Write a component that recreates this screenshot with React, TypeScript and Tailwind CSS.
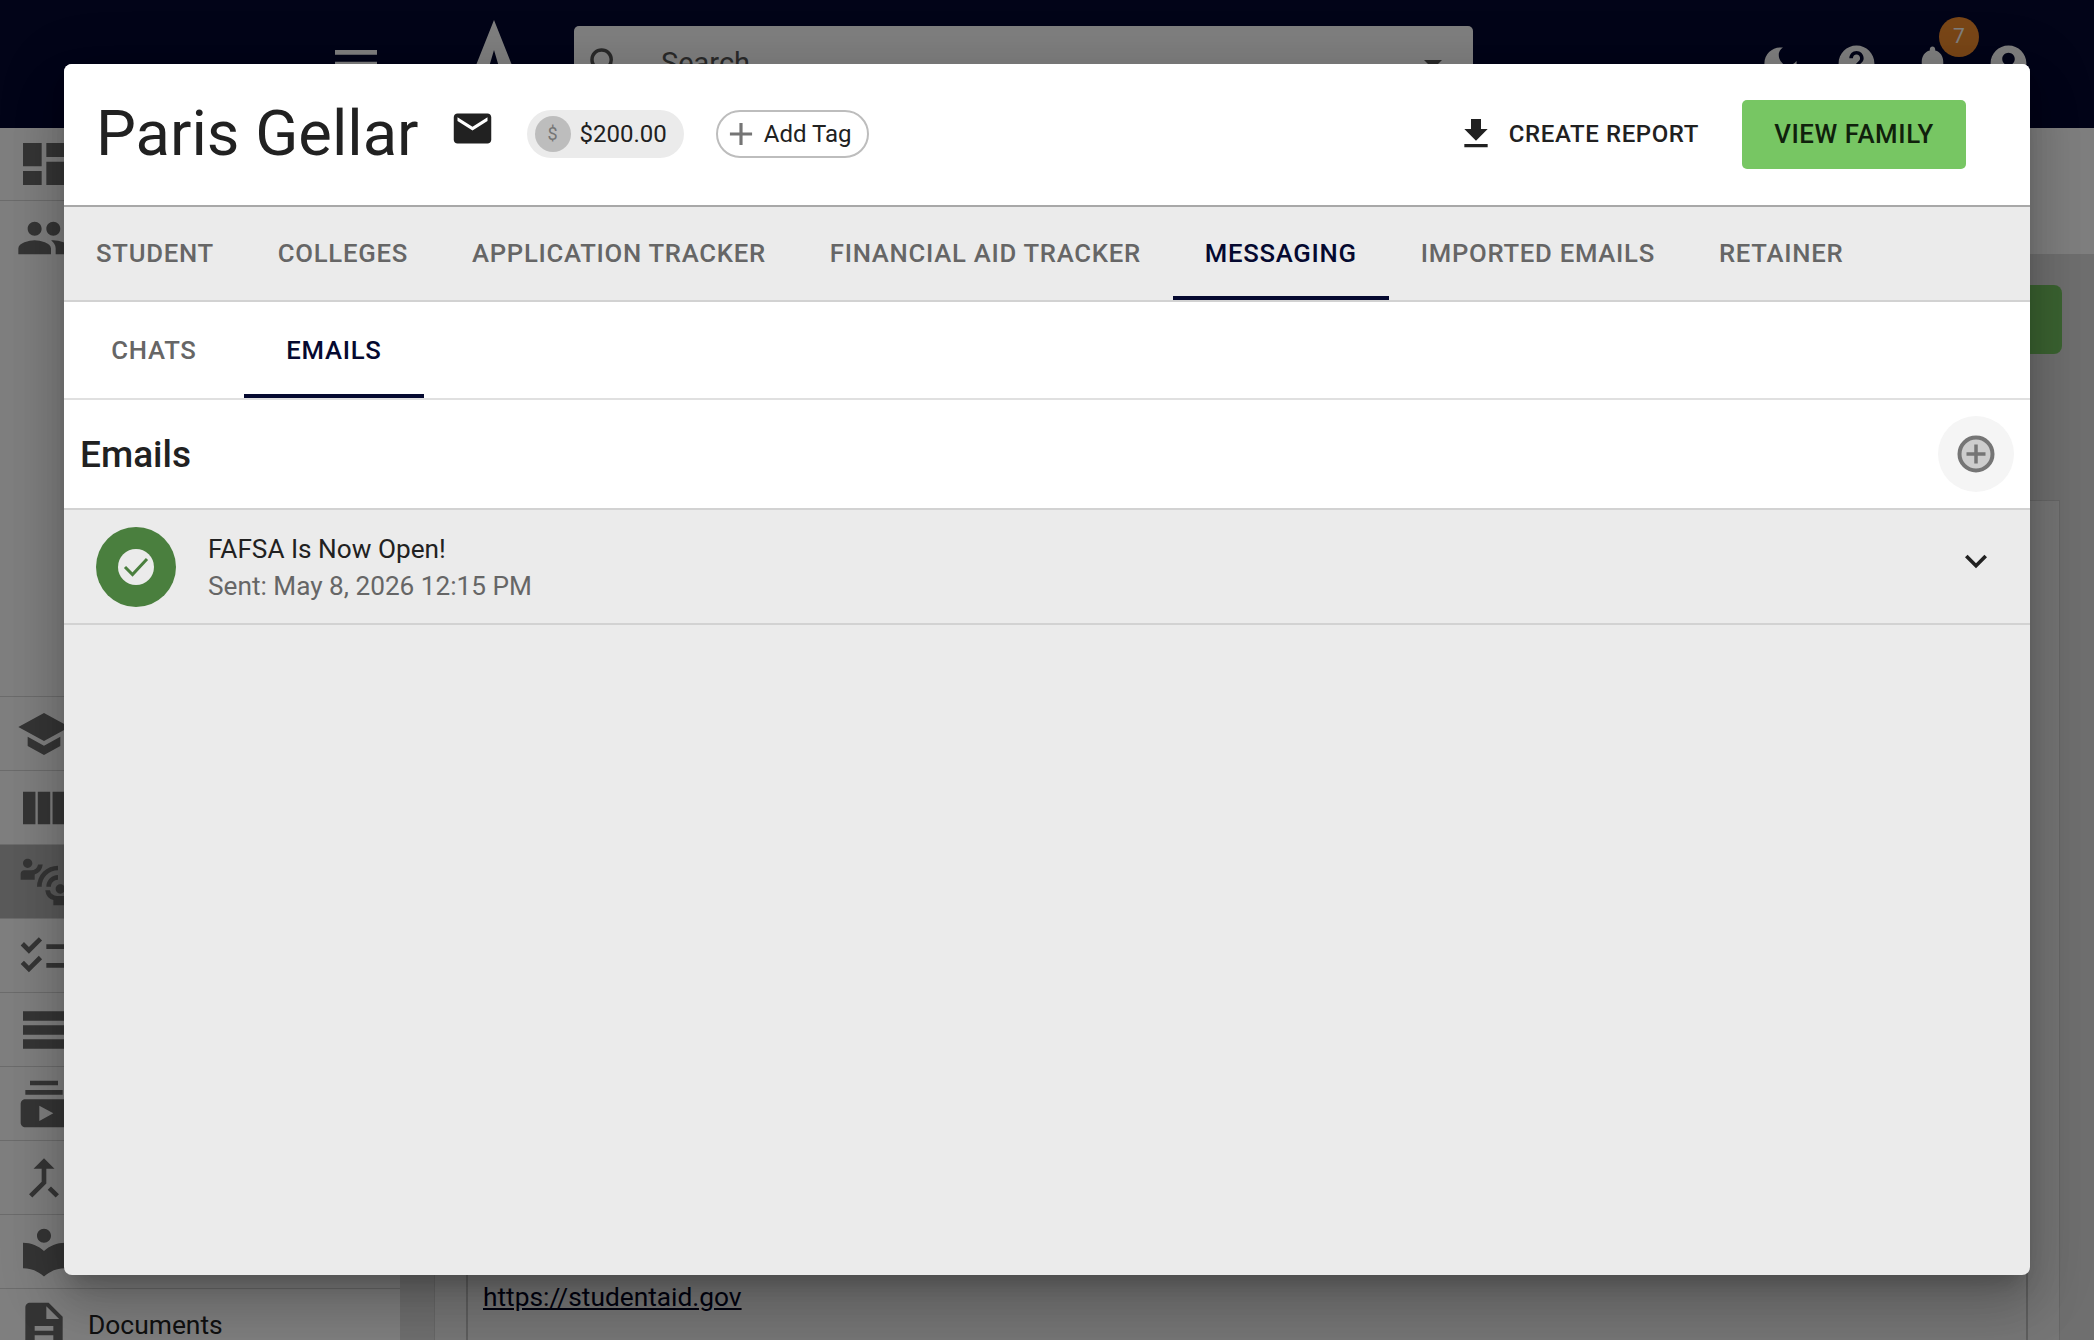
import {
  MdAccountCircle,
  MdAdd,
  MdCallMerge,
  MdChecklist,
  MdConnectWithoutContact,
  MdDarkMode,
  MdDashboard,
  MdDescription,
  MdEmail,
  MdFileDownload,
  MdHelp,
  MdKeyboardArrowDown,
  MdLocalLibrary,
  MdMenu,
  MdNotifications,
  MdPeople,
  MdSchool,
  MdSearch,
  MdSubscriptions,
  MdTableRows,
  MdViewColumn,
} from 'react-icons/md';

const tabs = ['STUDENT', 'COLLEGES', 'APPLICATION TRACKER', 'FINANCIAL AID TRACKER', 'MESSAGING', 'IMPORTED EMAILS', 'RETAINER'];

const lowerNav = [
  { icon: MdSchool },
  { icon: MdViewColumn },
  { icon: MdConnectWithoutContact, active: true },
  { icon: MdChecklist },
  { icon: MdTableRows },
  { icon: MdSubscriptions },
  { icon: MdCallMerge },
  { icon: MdLocalLibrary },
];

const TopBar = () => (
  <header className="h-[128px] bg-[#050930] flex items-start text-white shrink-0">
    <MdMenu className="ml-[328px] mt-[36px] text-[56px] shrink-0" />
    {/* Logo */}
    <svg className="ml-[75px] mt-[20px] shrink-0" width="70" height="90" viewBox="0 0 70 90">
      <path d="M35 0 L70 88 L52 88 L35 30 L18 88 L0 88 Z" fill="white" />
    </svg>
    {/* Search */}
    <div className="ml-[45px] mt-[26px] w-[899px] h-[76px] bg-white rounded-[5px] flex items-center pl-[11px] pr-[31px] text-[#555]">
      <MdSearch className="text-[42px] shrink-0" />
      <span className="ml-[34px] text-[29px]">Search</span>
      <span className="ml-auto w-0 h-0 border-x-[9px] border-x-transparent border-t-[9px] border-t-[#555]" />
    </div>
    <div className="ml-auto mr-[48px] mt-[42px] flex items-center">
      <div className="w-[76px] flex justify-center"><MdDarkMode className="text-[43px]" /></div>
      <div className="w-[76px] flex justify-center"><MdHelp className="text-[43px]" /></div>
      <div className="w-[76px] flex justify-center relative">
        <MdNotifications className="text-[43px]" />
        <span className="absolute left-[45px] top-[-25px] w-[40px] h-[40px] rounded-full bg-[#f28c2e] text-white text-[21px] flex items-center justify-center">7</span>
      </div>
      <div className="w-[76px] flex justify-center"><MdAccountCircle className="text-[43px]" /></div>
    </div>
  </header>
);

const NavRow = ({ icon: Icon, active, label }: { icon: typeof MdSchool; active?: boolean; label?: string }) => (
  <div className={`h-[74px] border-b border-[#d8d8d8] flex items-center pl-[16px] shrink-0 ${active ? 'bg-[#b4b4b4]' : ''}`}>
    <Icon className="text-[56px] text-[#6a6a6a] shrink-0" />
    {label && <span className="text-[26.4px] text-[#222] ml-[16px]">{label}</span>}
  </div>
);

const Background = () => (
  <div className="flex flex-col h-full">
    <TopBar />
    <div className="flex flex-1 min-h-0">
      <aside className="w-[400px] bg-white shrink-0 flex flex-col">
        <div className="h-[73px] border-b border-[#d8d8d8] flex items-center pl-[16px] shrink-0">
          <MdDashboard className="text-[56px] text-[#6a6a6a]" />
        </div>
        {/* People plus the open, empty group under it */}
        <div className="h-[496px] border-b border-[#d8d8d8] pl-[16px] pt-[9px] shrink-0">
          <MdPeople className="text-[56px] text-[#6a6a6a]" />
        </div>
        {lowerNav.map((item, i) => (
          <NavRow key={i} icon={item.icon} active={item.active} />
        ))}
        <NavRow icon={MdDescription} label="Documents" />
      </aside>
      <main className="flex-1 bg-[#dedede] flex flex-col min-w-0">
        <div className="h-[126px] bg-white shrink-0" />
        <div className="flex justify-end pr-[32px] pt-[31px] shrink-0">
          <div className="w-[200px] h-[69px] rounded-[8px] bg-[#77c663]" />
        </div>
        <div className="mt-[146px] mx-[34px] flex-1 border-t border-x border-[#cfcfcf] bg-[#ececec] px-[31px] pt-[40px]">
          <div className="h-full border-x-2 border-[#bdbdbd] px-[15px] pt-[738px] text-[26.3px] leading-[36px] text-[#05071f]">
            <a className="underline" href="#studentaid">https://studentaid.gov</a>
          </div>
        </div>
      </main>
    </div>
  </div>
);

const StudentDialog = () => (
  <div className="absolute left-[64px] top-[64px] w-[1966px] h-[1211px] bg-[#ebebeb] rounded-[8px] overflow-hidden flex flex-col shadow-[0_15px_20px_-9px_rgba(0,0,0,0.2),0_32px_51px_4px_rgba(0,0,0,0.14),0_12px_61px_11px_rgba(0,0,0,0.12)] font-['Roboto',sans-serif]">
    {/* Title row */}
    <div className="h-[141px] bg-white flex items-center pl-[32px] pr-[64px] shrink-0">
      <h1 className="mb-[2px] text-[63.3px] leading-none text-[#212121] font-normal">Paris Gellar</h1>
      <MdEmail className="ml-[31px] mb-[12px] text-[45px] text-[#212121] shrink-0" />
      <div className="ml-[32px] mb-[2px] h-[48px] rounded-full bg-[#ebebeb] flex items-center pl-[8px] pr-[17px]">
        <span className="w-[36px] h-[36px] rounded-full bg-[#bdbdbd] text-[#757575] text-[18px] flex items-center justify-center">$</span>
        <span className="ml-[9px] text-[24px] text-[#212121]">$200.00</span>
      </div>
      <div className="ml-[32px] mb-[2px] h-[48px] rounded-full border-2 border-[#bdbdbd] flex items-center pl-[4px] pr-[15px]">
        <MdAdd className="text-[38px] text-[#757575]" />
        <span className="ml-[4px] text-[24px] text-[#212121]">Add Tag</span>
      </div>
      <button className="ml-auto mb-[2px] flex items-center text-[24px] font-medium text-[#212121] tracking-[0.6px]">
        <MdFileDownload className="text-[40px] mr-[13px]" />
        CREATE REPORT
      </button>
      <button className="ml-[43px] w-[224px] h-[69px] rounded-[5px] bg-[#77c663] text-[25.8px] font-medium text-[#10210c] tracking-[0.6px]">VIEW FAMILY</button>
    </div>

    {/* Main tabs */}
    <nav className="h-[97px] border-t-2 border-b-2 border-t-[#a8a8a8] border-b-[#d2d2d2] flex shrink-0">
      {tabs.map((tab) => (
        <div
          key={tab}
          className={`relative px-[32px] flex items-center text-[25.7px] font-medium tracking-[0.72px] ${tab === 'MESSAGING' ? 'text-[#050930]' : 'text-[#666666]'}`}
        >
          {tab}
          {tab === 'MESSAGING' && <span className="absolute left-0 right-0 bottom-0 h-[4px] bg-[#050930]" />}
        </div>
      ))}
    </nav>

    {/* Sub tabs */}
    <div className="h-[98px] bg-white border-b-2 border-[#e0e0e0] flex shrink-0">
      <div className="w-[180px] flex items-center justify-center text-[25.7px] font-medium tracking-[0.72px] text-[#666666]">CHATS</div>
      <div className="relative w-[180px] flex items-center justify-center text-[25.7px] font-medium tracking-[0.72px] text-[#050930]">
        EMAILS
        <span className="absolute left-0 right-0 bottom-0 h-[4px] bg-[#050930]" />
      </div>
    </div>

    {/* Emails header */}
    <div className="h-[110px] bg-white border-b-2 border-[#d2d2d2] flex items-center justify-between pl-[16px] pr-[16px] shrink-0">
      <h2 className="mt-[1px] text-[37px] font-medium text-[#212121]">Emails</h2>
      <button className="w-[76px] h-[76px] rounded-full bg-[#f5f5f5] flex items-center justify-center">
        <svg width="38" height="38" viewBox="0 0 38 38">
          <circle cx="19" cy="19" r="16.5" fill="#cdcdcd" stroke="#757575" strokeWidth="4" />
          <path d="M19 9.5v19M9.5 19h19" stroke="#757575" strokeWidth="3.5" />
        </svg>
      </button>
    </div>

    {/* Email row */}
    <div className="h-[115px] border-b-2 border-[#d2d2d2] flex items-center pl-[32px] pr-[32px] shrink-0">
      <div className="w-[80px] h-[80px] rounded-full bg-[#4a7f3e] flex items-center justify-center shrink-0">
        <svg width="36" height="36" viewBox="0 0 36 36">
          <circle cx="18" cy="18" r="18" fill="#ebebeb" />
          <path d="M7 18l7.5 7.5L29 10" fill="none" stroke="#4a7f3e" strokeWidth="3" />
        </svg>
      </div>
      <div className="ml-[32px] mt-[2px]">
        <div className="text-[26.2px] leading-[37px] text-[#212121]">FAFSA Is Now Open!</div>
        <div className="text-[26.2px] leading-[37px] text-[#666666]">Sent: May 8, 2026 12:15 PM</div>
      </div>
      <MdKeyboardArrowDown className="ml-auto mb-[11px] text-[44px] text-[#212121]" />
    </div>
  </div>
);

const App = () => {
  return (
    <div className="relative w-full h-screen overflow-hidden font-['Roboto',sans-serif]">
      <Background />
      <div className="absolute inset-0 bg-black/50" />
      <StudentDialog />
    </div>
  );
};

export default App;
